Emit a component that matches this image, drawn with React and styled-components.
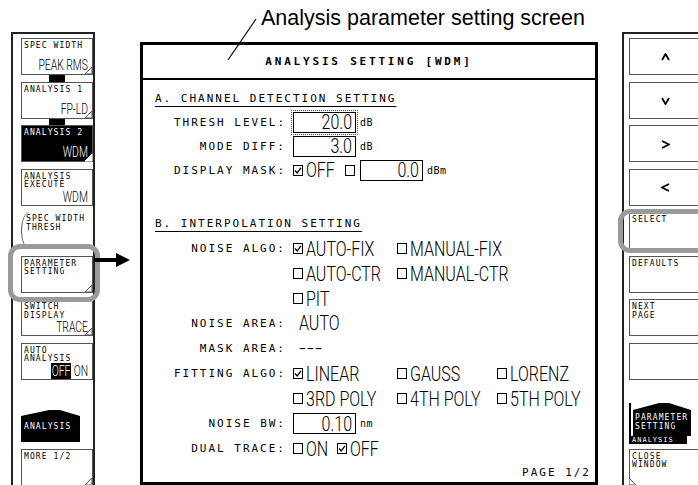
import React from 'react';
import styled, { createGlobalStyle, css } from 'styled-components';

const MONO = `"DejaVu Sans Mono", "Liberation Mono", monospace`;
const THIN = `Roboto, "Liberation Sans", sans-serif`;

const Global = createGlobalStyle`
  html, body { margin: 0; padding: 0; background: #fff; }
  body { width: 698px; height: 485px; overflow: hidden; }
`;

const Page = styled.div`
  position: relative;
  width: 698px;
  height: 485px;
  overflow: hidden;
  background: #fff;
  color: #000;
  display: flex;
  flex-direction: column;
`;

const Caption = styled.div`
  flex: none;
  box-sizing: border-box;
  height: 32px;
  padding: 6px 0 0 261px;
  font-family: "Liberation Sans", Arial, sans-serif;
  font-size: 21.5px;
  line-height: 24px;
  white-space: nowrap;
`;

const Leader = styled.svg`
  position: absolute;
  left: 0;
  top: 0;
  z-index: 5;
  pointer-events: none;
`;

const Body = styled.div`
  flex: 1;
  display: flex;
  align-items: stretch;
  min-height: 0;
`;

/* ---------- soft key panels ---------- */

const Panel = styled.div`
  flex: none;
  box-sizing: border-box;
  border: 2px solid #222;
  border-bottom: none;
  display: flex;
  flex-direction: column;
  gap: 6.5px;
  ${p => p.$side === 'left' ? css`
    margin-left: 11px;
    width: 84px;
    padding: 4px 0 0 8px;
  ` : css`
    margin-left: 24px;
    width: 90px;
    border-right: none;
    padding: 4px 0 0 5px;
  `}
`;

const Key = styled.div`
  position: relative;
  flex: none;
  box-sizing: border-box;
  width: 72px;
  height: 37px;
  border: 1px solid #555;
  background: ${p => p.$dark ? '#000' : '#fff'};
  color: ${p => p.$dark ? '#fff' : '#000'};
  padding: 3px 2px 2px 2px;
  display: flex;
  flex-direction: column;
  justify-content: space-between;
  ${p => p.$center && css`
    align-items: center;
    justify-content: center;
  `}
  ${p => p.$paren && css`
    border: none;
    border-left: 1.2px solid #555;
    border-radius: 9px 0 0 9px / 18px 0 0 18px;
    padding-left: 4px;
  `}
  ${p => p.$linked && css`
    &::before {
      content: '';
      position: absolute;
      left: 27px;
      bottom: -8px;
      width: 16px;
      height: 7px;
      background: #000;
    }
  `}
  ${p => p.$ring && css`
    &::after {
      content: '';
      position: absolute;
      z-index: 3;
      box-sizing: border-box;
      border: 5px solid #9a9a9a;
      border-radius: 12px;
      top: ${p.$ring[0]}px;
      right: ${p.$ring[1]}px;
      bottom: ${p.$ring[2]}px;
      left: ${p.$ring[3]}px;
    }
  `}
`;

const KeyLabel = styled.div`
  font-family: ${MONO};
  font-size: 8px;
  line-height: 8.5px;
  letter-spacing: 1.1px;
  white-space: pre;
`;

const KeyValue = styled.div`
  display: flex;
  justify-content: flex-end;
  padding-right: 2px;
`;

const Cond = styled.span`
  display: inline-block;
  font-family: ${THIN};
  font-weight: 300;
  font-size: ${p => p.$size || 20}px;
  line-height: 1;
  letter-spacing: ${p => p.$ls || 0}px;
  white-space: pre;
  transform: scaleX(${p => p.$sx || 0.8});
  transform-origin: ${p => p.$origin || 'left'} center;
`;

const Inverse = styled.span`
  background: #000;
  color: #fff;
  padding: 0 1px;
`;

const FoldMark = styled.svg`
  position: absolute;
  bottom: -1px;
  ${p => p.$left ? 'left: -1px;' : 'right: -1px;'}
`;

function Fold({ left, dark }) {
  const pts = left ? '0,0 7,7 0,7' : '7,0 7,7 0,7';
  return (
    <FoldMark $left={left} width="8" height="8" viewBox="0 0 8 8">
      <polygon points={pts} fill="#fff" stroke={dark ? '#fff' : '#555'} strokeWidth="1" />
    </FoldMark>
  );
}

const Spacer = styled.div`
  flex: none;
  height: ${p => p.$h}px;
`;

const Tab = styled.div`
  flex: none;
  box-sizing: border-box;
  width: 59px;
  height: 32px;
  background: #000;
  color: #fff;
  clip-path: polygon(0 6px, 48% 0, 66% 0, 100% 6px, 100% 100%, 0 100%);
  padding: 13px 0 0 3px;
`;

const TabStack = styled.div`
  flex: none;
  display: flex;
  flex-direction: column;
  width: 60px;
  margin: -7px 0 -2px;
  border-left: 2px solid #000;
`;

const TabTop = styled.div`
  box-sizing: border-box;
  height: 33px;
  margin-left: 2px;
  background: #000;
  color: #fff;
  clip-path: polygon(0 7px, 45% 0, 62% 0, 100% 7px, 100% 100%, 0 100%);
  padding: 11px 0 0 2px;
`;

const TabStrip = styled.div`
  box-sizing: border-box;
  height: 8px;
  width: 56px;
  background: #000;
  color: #fff;
  font-family: ${MONO};
  font-size: 7px;
  line-height: 8px;
  letter-spacing: 1px;
  padding-left: 1px;
`;

const Chevron = ({ dir }) => {
  const pts = {
    up: '1,7 4.5,1 8,7',
    down: '1,1 4.5,7 8,1',
    right: '1,1 8,4.5 1,8',
    left: '8,1 1,4.5 8,8',
  }[dir];
  const h = dir === 'up' || dir === 'down' ? 8 : 9;
  return (
    <svg width="9" height={h} viewBox={`0 0 9 ${h}`}>
      <polyline points={pts} fill="none" stroke="#000" strokeWidth="1.8" />
    </svg>
  );
};

/* ---------- arrow gutter ---------- */

const Gutter = styled.div`
  flex: none;
  width: 45px;
  position: relative;
  z-index: 4;
`;

const Pointer = styled.svg`
  display: block;
  margin-top: 221px;
  margin-left: -3px;
`;

/* ---------- dialog ---------- */

const Dialog = styled.div`
  flex: none;
  box-sizing: border-box;
  width: 458px;
  margin-top: 10px;
  border: 3px solid #000;
  display: flex;
  flex-direction: column;
`;

const TitleBar = styled.div`
  flex: none;
  height: 33px;
  border-bottom: 2px solid #000;
  display: flex;
  align-items: center;
  justify-content: center;
  font-family: ${MONO};
  font-weight: bold;
  font-size: 11px;
  letter-spacing: 2.8px;
`;

const Content = styled.div`
  flex: 1;
  display: flex;
  flex-direction: column;
  padding-top: 6px;
`;

const Section = styled.div`
  flex: none;
  height: ${p => p.$h || 24}px;
  margin-top: ${p => p.$gap || 0}px;
  display: flex;
  align-items: center;
  padding-left: 12px;
  font-family: ${MONO};
  font-size: 11px;
  letter-spacing: 2px;
  text-decoration: underline;
  text-underline-offset: 4px;
  text-decoration-thickness: 1px;
`;

const Row = styled.div`
  flex: none;
  height: ${p => p.$h || 24}px;
  display: flex;
  align-items: center;
`;

const Label = styled.div`
  flex: none;
  width: 143px;
  margin-right: 7px;
  text-align: right;
  font-family: ${MONO};
  font-size: 11px;
  letter-spacing: 2px;
  white-space: pre;
`;

const Options = styled.div`
  display: grid;
  grid-template-columns: 104px 100px auto;
  align-items: center;
`;

const Item = styled.div`
  display: flex;
  align-items: center;
  width: ${p => p.$w ? `${p.$w}px` : 'auto'};
  flex: none;
`;

const BoxMark = styled.svg`
  flex: none;
  display: block;
  margin-right: 3px;
`;

function Check({ on }) {
  return (
    <BoxMark width="10" height="11" viewBox="0 0 10 11">
      <rect x="0.5" y="0.5" width="9" height="10" fill="#fff" stroke="#000" strokeWidth="1" />
      {on && <polyline points="2,5.5 4.2,8 8,2.8" fill="none" stroke="#000" strokeWidth="1.3" />}
    </BoxMark>
  );
}

const Field = styled.div`
  flex: none;
  box-sizing: border-box;
  width: 63px;
  height: 21px;
  border: 1px solid #000;
  display: flex;
  align-items: center;
  justify-content: flex-end;
  padding-right: 3px;
  ${p => p.$focus && css`
    outline: 1px dotted #555;
    outline-offset: 1px;
  `}
`;

const Unit = styled.span`
  font-family: ${MONO};
  font-size: 10px;
  letter-spacing: 0.5px;
  margin-left: 4px;
`;

const Plain = styled.div`
  padding-left: 6px;
`;

const Footer = styled.div`
  flex: 1;
  display: flex;
  align-items: flex-end;
  justify-content: flex-end;
  padding: 0 4px 3px 0;
  font-family: ${MONO};
  font-size: 11px;
  letter-spacing: 2px;
`;

function Opt({ on, children, w }) {
  return (
    <Item $w={w}>
      <Check on={on} />
      {children && <Cond>{children}</Cond>}
    </Item>
  );
}

function Value({ children }) {
  return (
    <KeyValue>
      <Cond $size={14} $sx={0.74} $origin="right">{children}</Cond>
    </KeyValue>
  );
}

export default function App() {
  return (
    <Page>
      <Global />
      <Caption>Analysis parameter setting screen</Caption>
      <Leader width="698" height="485" viewBox="0 0 698 485">
        <line x1="256" y1="19" x2="228" y2="60" stroke="#000" strokeWidth="1.2" />
      </Leader>
      <Body>
        <Panel $side="left">
          <Key $linked>
            <KeyLabel>SPEC WIDTH</KeyLabel>
            <Value>PEAK RMS</Value>
            <Fold />
          </Key>
          <Key $linked>
            <KeyLabel>ANALYSIS 1</KeyLabel>
            <Value>FP-LD</Value>
            <Fold />
          </Key>
          <Key $dark>
            <KeyLabel>ANALYSIS 2</KeyLabel>
            <Value>WDM</Value>
            <Fold dark />
          </Key>
          <Key>
            <KeyLabel>{'ANALYSIS\nEXECUTE'}</KeyLabel>
            <Value>WDM</Value>
          </Key>
          <Key $paren>
            <KeyLabel>{'SPEC WIDTH\nTHRESH'}</KeyLabel>
          </Key>
          <Key $ring={[-12.5, -8, -10, -14]}>
            <KeyLabel>{'PARAMETER\nSETTING'}</KeyLabel>
            <Fold />
          </Key>
          <Key>
            <KeyLabel>{'SWITCH\nDISPLAY'}</KeyLabel>
            <Value>TRACE</Value>
            <Fold />
          </Key>
          <Key>
            <KeyLabel>{'AUTO\nANALYSIS'}</KeyLabel>
            <KeyValue>
              <Cond $size={14} $sx={0.74} $origin="right"><Inverse>OFF</Inverse> ON</Cond>
            </KeyValue>
          </Key>
          <Spacer $h={17.5} />
          <Tab>
            <KeyLabel>ANALYSIS</KeyLabel>
          </Tab>
          <Key>
            <KeyLabel>MORE 1/2</KeyLabel>
            <Fold />
          </Key>
        </Panel>

        <Gutter>
          <Pointer width="42" height="14" viewBox="0 0 42 14">
            <rect x="2" y="5" width="24" height="4" fill="#000" />
            <polygon points="24,0 38,7 24,14" fill="#000" />
          </Pointer>
        </Gutter>

        <Dialog>
          <TitleBar>ANALYSIS SETTING [WDM]</TitleBar>
          <Content>
            <Section>A. CHANNEL DETECTION SETTING</Section>
            <Row>
              <Label>THRESH LEVEL:</Label>
              <Field $focus><Cond $origin="right">20.0</Cond></Field>
              <Unit>dB</Unit>
            </Row>
            <Row>
              <Label>MODE DIFF:</Label>
              <Field><Cond $origin="right">3.0</Cond></Field>
              <Unit>dB</Unit>
            </Row>
            <Row>
              <Label>DISPLAY MASK:</Label>
              <Opt on w={52}>OFF</Opt>
              <Opt w={15} />
              <Field><Cond $origin="right">0.0</Cond></Field>
              <Unit>dBm</Unit>
            </Row>

            <Section $gap={29} $h={25}>B. INTERPOLATION SETTING</Section>
            <Row $h={25}>
              <Label>NOISE ALGO:</Label>
              <Options>
                <Opt on>AUTO-FIX</Opt>
                <Opt>MANUAL-FIX</Opt>
              </Options>
            </Row>
            <Row $h={25}>
              <Label />
              <Options>
                <Opt>AUTO-CTR</Opt>
                <Opt>MANUAL-CTR</Opt>
              </Options>
            </Row>
            <Row $h={25}>
              <Label />
              <Options>
                <Opt>PIT</Opt>
              </Options>
            </Row>
            <Row $h={25}>
              <Label>NOISE AREA:</Label>
              <Plain><Cond>AUTO</Cond></Plain>
            </Row>
            <Row $h={25}>
              <Label>MASK AREA:</Label>
              <Plain><Cond $sx={1.2} $ls={1}>---</Cond></Plain>
            </Row>
            <Row $h={25}>
              <Label>FITTING ALGO:</Label>
              <Options>
                <Opt on>LINEAR</Opt>
                <Opt>GAUSS</Opt>
                <Opt>LORENZ</Opt>
              </Options>
            </Row>
            <Row $h={25}>
              <Label />
              <Options>
                <Opt>3RD POLY</Opt>
                <Opt>4TH POLY</Opt>
                <Opt>5TH POLY</Opt>
              </Options>
            </Row>
            <Row $h={25}>
              <Label>NOISE BW:</Label>
              <Field><Cond $origin="right">0.10</Cond></Field>
              <Unit>nm</Unit>
            </Row>
            <Row $h={25}>
              <Label>DUAL TRACE:</Label>
              <Opt w={44}>ON</Opt>
              <Opt on>OFF</Opt>
            </Row>
            <Footer>PAGE 1/2</Footer>
          </Content>
        </Dialog>

        <Panel $side="right">
          <Key $center><Chevron dir="up" /></Key>
          <Key $center><Chevron dir="down" /></Key>
          <Key $center><Chevron dir="right" /></Key>
          <Key $center><Chevron dir="left" /></Key>
          <Key $ring={[-4.5, -20, -4.5, -12]}>
            <KeyLabel>SELECT</KeyLabel>
          </Key>
          <Key>
            <KeyLabel>DEFAULTS</KeyLabel>
          </Key>
          <Key>
            <KeyLabel>{'NEXT\nPAGE'}</KeyLabel>
          </Key>
          <Key />
          <Spacer $h={17.5} />
          <TabStack>
            <TabTop>
              <KeyLabel>{'PARAMETER\nSETTING'}</KeyLabel>
            </TabTop>
            <TabStrip>ANALYSIS</TabStrip>
          </TabStack>
          <Key>
            <KeyLabel>{'CLOSE\nWINDOW'}</KeyLabel>
            <Fold left />
          </Key>
        </Panel>
      </Body>
    </Page>
  );
}
